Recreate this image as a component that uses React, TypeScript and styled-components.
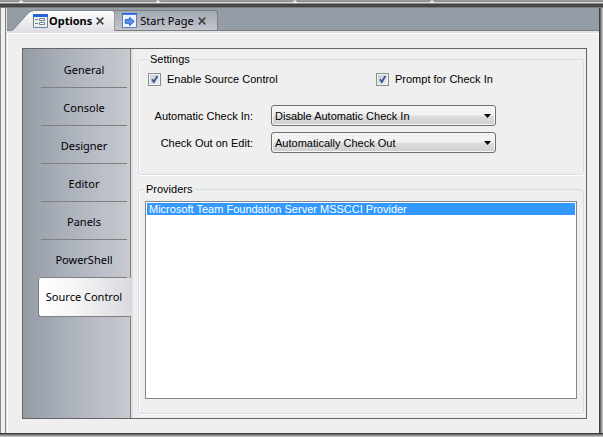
import React, { useState } from "react";
import styled, { createGlobalStyle } from "styled-components";

const GlobalStyle = createGlobalStyle`
  *, *::before, *::after { box-sizing: border-box; }
  html, body, #root { height: 100%; }
  body { margin: 0; background: #efefef; color: #000; font: 11px/16px "Liberation Sans", Arial, sans-serif; }
  button, select, input { font: inherit; color: inherit; }
`;

const Window = styled.div`
  display: flex;
  flex-direction: column;
  height: 100vh;
  overflow: hidden;
  background: #8f8f8f;
`;

const TopEdge = styled.div`
  flex: none;
  display: flex;
  height: 8px;
  padding-left: 18px;
  gap: 131px;
  background: linear-gradient(#9c9c9c 0 1px, #8a8a8a 1px 2px, #dcdcdc 2px 3px, #8b8b8b 3px 4px, #454545 4px 7px, #767b81 7px 8px);
`;

const Notch = styled.i`
  width: 6px;
  height: 3px;
  background: #eef3f1;
  clip-path: polygon(50% 0, 100% 100%, 0 100%);
`;

const Middle = styled.div`
  flex: 1;
  display: flex;
  min-height: 0;
`;

const LeftEdge = styled.div`
  flex: none;
  width: 7px;
  background: linear-gradient(90deg, #8a8a8a 0 1px, #efefef 1px 5px, #858585 5px 6px, #dddde2 6px 7px);
`;

const RightEdge = styled.div`
  flex: none;
  width: 4px;
  background: linear-gradient(90deg, #3f3f3f 0 1px, #6b6b6b 1px 2px, #989898 2px 3px, #bdbdbd 3px 4px);
`;

const BottomEdge = styled.div`
  flex: none;
  height: 4px;
  background: linear-gradient(#3f3f3f 0 1px, #6b6b6b 1px 2px, #989898 2px 3px, #bdbdbd 3px 4px);
`;

const Main = styled.main`
  flex: 1;
  min-width: 0;
  display: flex;
  flex-direction: column;
  background: #efefef;
`;

const TabStrip = styled.div`
  flex: none;
  display: flex;
  align-items: flex-end;
  height: 23px;
  background: #949ca6;
  border-bottom: 1px solid #7d7d7d;
`;

const TabBox = styled.div<{ $active?: boolean }>`
  position: relative;
  display: flex;
  align-items: center;
  height: ${(p) => (p.$active ? 21 : 20)}px;
  margin-bottom: ${(p) => (p.$active ? -1 : 0)}px;
  padding: ${(p) => (p.$active ? "0 11px 0 26px" : "0 11px 0 7px")};
  border: solid #7f7f7f;
  border-width: ${(p) => (p.$active ? "0" : "1px 1px 0 0")};
  border-radius: 0 3px 0 0;
  background: ${(p) => (p.$active ? "none" : "linear-gradient(#a3a9b2, #c3c5cc)")};
`;

const TabShape = styled.svg`
  position: absolute;
  inset: 0;
  width: 100%;
  height: 100%;
`;

const TabButton = styled.button<{ $active?: boolean }>`
  position: relative;
  display: flex;
  align-items: center;
  gap: ${(p) => (p.$active ? 1 : 3)}px;
  padding: 0;
  border: 0;
  background: none;
  white-space: nowrap;
  font: ${(p) => (p.$active ? "bold" : "normal")} 11px/16px "Noto Sans", "Open Sans", sans-serif;
`;

const CloseButton = styled.button`
  position: relative;
  display: flex;
  margin-left: 4px;
  padding: 0;
  border: 0;
  background: none;
`;

const PageEdge = styled.div`
  flex: none;
  height: 3px;
  background: linear-gradient(#e0dfe5 0 2px, #fff 2px 3px);
`;

const Page = styled.div`
  flex: 1;
  display: flex;
  min-height: 0;
  padding: 14px 12px 14px 14px;
  border-left: 1px solid #fff;
`;

const OptionsPanel = styled.section`
  flex: 1;
  display: flex;
  min-width: 0;
  border: 1px solid #666;
`;

const Sidebar = styled.nav`
  flex: none;
  width: 108px;
  padding: 1px 0 0 15px;
  background: linear-gradient(90deg, #949ba5, #a9b0b9 38%, #bdbfc9 76%, #c8cacf);
  border-right: 1px solid #7f7f7f;
`;

const NavItem = styled.button<{ $selected?: boolean }>`
  display: block;
  width: ${(p) => (p.$selected ? 93 : 86)}px;
  height: ${(p) => (p.$selected ? 39 : 38)}px;
  margin-left: ${(p) => (p.$selected ? 0 : 3)}px;
  padding: ${(p) => (p.$selected ? "0 2px 0 0" : "2px 0 0")};
  border: solid #7f7f7f;
  border-width: ${(p) => (p.$selected ? "0 0 1px 1px" : "0 0 1px")};
  border-radius: ${(p) => (p.$selected ? "3px 0 0 3px" : "0")};
  background: ${(p) => (p.$selected ? "linear-gradient(90deg, #fff, #f5f5f6 40%, #d9dae0)" : "none")};
  text-align: center;
  white-space: nowrap;
  font: 11px/16px "Noto Sans", "Open Sans", sans-serif;
`;

const Content = styled.div`
  flex: 1;
  min-width: 0;
  display: flex;
  flex-direction: column;
  gap: 7px;
  padding: 3px 2px 4px 5px;
  border-left: 2px solid #dddee3;
`;

const Group = styled.fieldset<{ $fill?: boolean }>`
  flex: ${(p) => (p.$fill ? "1" : "none")};
  min-width: 0;
  min-height: 0;
  margin: 0;
  padding: ${(p) => (p.$fill ? "5px 6px 14px 6px" : "5px 8px 21px 9px")};
  border: 1px solid #d3dde6;
  border-radius: 3px;
  box-shadow: inset 1px 0 #fff, 0 1px #fff;
`;

const Legend = styled.legend<{ $flush?: boolean }>`
  margin-left: ${(p) => (p.$flush ? -1 : 0)}px;
  padding: 0 2px;
  line-height: 14px;
`;

const Checks = styled.div`
  display: grid;
  grid-template-columns: 228px 1fr;
`;

const CheckLabel = styled.label`
  display: flex;
  align-items: center;
  gap: 6px;
`;

const tick = `url("data:image/svg+xml,%3Csvg xmlns='http://www.w3.org/2000/svg' viewBox='0 0 11 11'%3E%3Cpath d='M3 5.2 4.8 8 8.4 2' fill='none' stroke='%233f5798' stroke-width='1.9'/%3E%3C/svg%3E")`;

const Check = styled.input`
  appearance: none;
  width: 13px;
  height: 13px;
  margin: 0;
  border: 1px solid #8b8d8f;
  background: linear-gradient(135deg, #c4cad3, #f2f4f6);
  box-shadow: inset 0 0 0 1px #f4f4f4;
  &:checked { background-image: ${tick}, linear-gradient(135deg, #c4cad3, #f2f4f6); }
`;

const Fields = styled.div`
  display: grid;
  grid-template-columns: 105px minmax(0, 225px);
  gap: 6px 18px;
  margin-top: 18px;
  align-items: center;
`;

const FieldLabel = styled.label`
  text-align: right;
  white-space: nowrap;
`;

const Select = styled.select`
  appearance: none;
  height: 21px;
  padding: 0 20px 0 3px;
  border: 1px solid #707070;
  border-radius: 3px;
  box-shadow: inset 0 0 0 1px #f7f7f7;
  background:
    url("data:image/svg+xml,%3Csvg xmlns='http://www.w3.org/2000/svg' viewBox='0 0 7 4'%3E%3Cpath d='M0 0H7L3.5 4Z'/%3E%3C/svg%3E") right 4px center / 7px 4px no-repeat,
    linear-gradient(#f2f2f2 0 48%, #dddddd 52%, #cfcfcf);
`;

const ProviderList = styled.select`
  display: block;
  width: 100%;
  height: 100%;
  padding: 1px;
  border: 1px solid #828790;
  border-radius: 0;
  outline: 0;
  background: #fff;
`;

const Provider = styled.option`
  min-height: 0;
  padding: 0 2px;
  line-height: 13px;
  &:checked { color: #fff; background: #3399ff linear-gradient(#3399ff, #3399ff); }
`;

const FormIcon = () => (
  <svg width="15" height="14" viewBox="0 0 15 14" aria-hidden="true">
    <path d="M.5.5h14v13H.5z" fill="#f3efe0" stroke="#6886aa" />
    <path d="M0 0h15v3H0z" fill="#2764d8" />
    <path d="M2 5.5h3M2 9.5h3" stroke="#6d85a5" />
    <path d="M6.5 4.500h5v2h-5zM6.500 8.500h5v2h-5z" fill="#fff" stroke="#6d85a5" />
  </svg>
);

const StartIcon = () => (
  <svg width="15" height="15" viewBox="0 0 16 16" aria-hidden="true">
    <path d="M.5.5h15v15H.5z" fill="#eef4ff" stroke="#5478ba" />
    <path d="M0 0h16v2H0z" fill="#2b66df" />
    <path d="M3.500 7h4.500V4.500L13 9l-5 4.500V11H3.500z" fill="#5a90ee" stroke="#2f5cb8" />
  </svg>
);

const CloseIcon = () => (
  <svg width="8" height="8" viewBox="0 0 8 8" aria-hidden="true">
    <path d="m.7.7 6.6 6.6m0-6.6L.7 7.3" stroke="#444" strokeWidth="1.7" />
  </svg>
);

const pages = ["General", "Console", "Designer", "Editor", "Panels", "PowerShell", "Source Control"];

export default function App() {
  const [page, setPage] = useState("Source Control");
  return (
    <>
      <GlobalStyle />
      <Window>
        <TopEdge><Notch /><Notch /><Notch /><Notch /></TopEdge>
        <Middle>
          <LeftEdge />
          <Main>
            <TabStrip>
              <TabBox $active>
                <TabShape viewBox="0 0 107 21" preserveAspectRatio="none" aria-hidden="true">
                  <defs>
                    <linearGradient id="tab" x2="0" y2="1">
                      <stop stopColor="#fff" />
                      <stop offset="1" stopColor="#e0dfe5" />
                    </linearGradient>
                  </defs>
                  <path d="M0 21L4 20.500Q6 20 8 17.500L20 4Q23 .5 28 .5H103Q106.500 .5 106.500 4V21" fill="url(#tab)" stroke="#858585" />
                </TabShape>
                <TabButton $active><FormIcon />Options</TabButton>
                <CloseButton aria-label="Close Options"><CloseIcon /></CloseButton>
              </TabBox>
              <TabBox>
                <TabButton><StartIcon />Start Page</TabButton>
                <CloseButton aria-label="Close Start Page"><CloseIcon /></CloseButton>
              </TabBox>
            </TabStrip>
            <PageEdge />
            <Page>
              <OptionsPanel>
                <Sidebar>
                  {pages.map((name) => (
                    <NavItem key={name} $selected={name === page} onClick={() => setPage(name)}>{name}</NavItem>
                  ))}
                </Sidebar>
                <Content>
                  <Group>
                    <Legend>Settings</Legend>
                    <Checks>
                      <CheckLabel><Check type="checkbox" defaultChecked />Enable Source Control</CheckLabel>
                      <CheckLabel><Check type="checkbox" defaultChecked />Prompt for Check In</CheckLabel>
                    </Checks>
                    <Fields>
                      <FieldLabel htmlFor="check-in">Automatic Check In:</FieldLabel>
                      <Select id="check-in"><option>Disable Automatic Check In</option></Select>
                      <FieldLabel htmlFor="check-out">Check Out on Edit:</FieldLabel>
                      <Select id="check-out"><option>Automatically Check Out</option></Select>
                    </Fields>
                  </Group>
                  <Group $fill>
                    <Legend $flush>Providers</Legend>
                    <ProviderList size={12} aria-label="Providers" defaultValue="tfs">
                      <Provider value="tfs">Microsoft Team Foundation Server MSSCCI Provider</Provider>
                    </ProviderList>
                  </Group>
                </Content>
              </OptionsPanel>
            </Page>
          </Main>
          <RightEdge />
        </Middle>
        <BottomEdge />
      </Window>
    </>
  );
}
